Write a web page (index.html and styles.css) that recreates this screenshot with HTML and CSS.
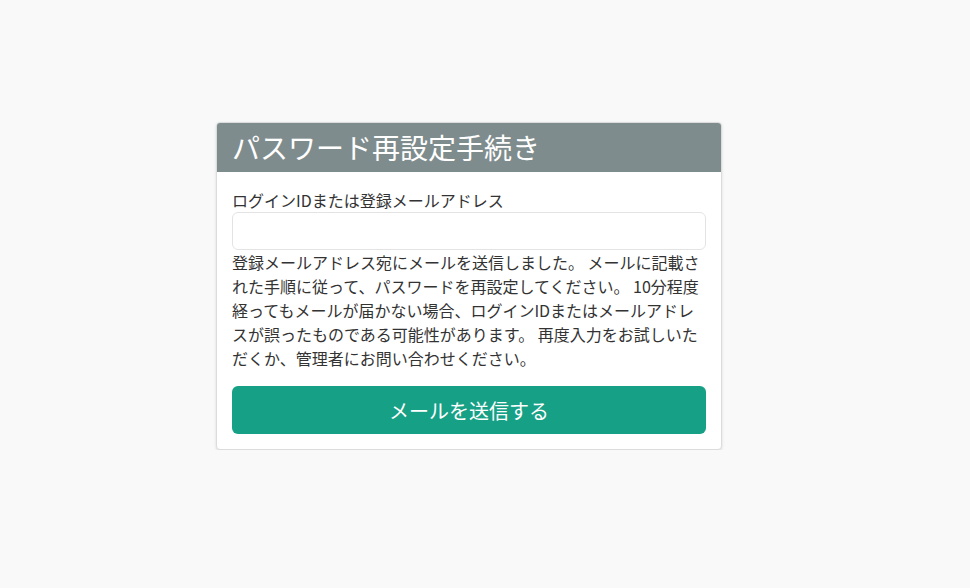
FILE: index.html
```html
<!DOCTYPE html>
<html lang="ja">
<head>
  <meta charset="UTF-8">
  <title>パスワード再設定手続き</title>
  <link rel="stylesheet" href="styles.css">
</head>
<body>

  <div class="card">
    <h1 class="card-title">パスワード再設定手続き</h1>

    <form id="formReset" class="card-body">
      <label for="loginId">ログインIDまたは登録メールアドレス</label>
      <input type="text" id="loginId">

      <p class="notice">登録メールアドレス宛にメールを送信しました。 メールに記載された手順に従って、パスワードを再設定してください。 10分程度経ってもメールが届かない場合、ログインIDまたはメールアドレスが誤ったものである可能性があります。 再度入力をお試しいただくか、管理者にお問い合わせください。</p>

      <button type="submit">メールを送信する</button>
    </form>
  </div>

</body>
</html>
```

FILE: styles.css
```css
* { box-sizing: border-box; }
body {
  font-family: "Noto Sans CJK JP", "Noto Sans", sans-serif;
  background: #f9f9f9;
  margin: 0;
  padding-top: 122px;
  color: #333;
}

.card {
  width: 506px;
  margin-left: 216px;
  background: #fff;
  border: 1px solid #dcdcdc;
  border-radius: 4px;
  box-shadow: 0 1px 3px rgba(0,0,0,0.12);
  overflow: hidden;
}

.card-title {
  margin: 0;
  height: 49px;
  padding: 0 15px;
  background: #7f8c8d;
  color: #fff;
  font-size: 28px;
  font-weight: normal;
  line-height: 48px;
}

.card-body {
  padding: 16px 15px 15px;
}

label {
  display: block;
  font-size: 16px;
  line-height: 24px;
}

input {
  display: block;
  width: 100%;
  height: 38px;
  padding: 6px 12px;
  border: 1px solid #e3e3e3;
  border-radius: 6px;
  font-size: 16px;
}

.notice {
  margin: 0;
  font-size: 16px;
  line-height: 24px;
}

button {
  display: block;
  width: 100%;
  height: 48px;
  margin-top: 16px;
  background: #16a085;
  color: #fff;
  border: none;
  border-radius: 6px;
  font-family: inherit;
  font-size: 20px;
  cursor: pointer;
}
```
